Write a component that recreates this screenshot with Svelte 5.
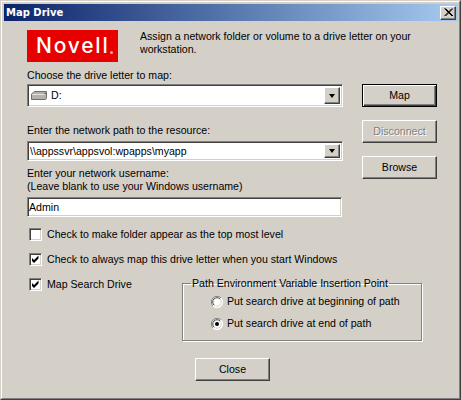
<script lang="ts">
	const checkPath = 'M2.5 5 L4.5 7 L9 2.5 V5.5 L4.5 10 L2.5 8 Z';
</script>

<div class="window">
	<div class="frame">
		<header class="titlebar">
			<span class="title">Map Drive</span>
			<button class="close-x" aria-label="Close">
				<svg width="9" height="9" viewBox="0 0 9 9"><path d="M0.5 0.5 L8 8 M1.5 0.5 L9 8 M8 0.5 L0.5 8 M9 0.5 L1.5 8" stroke="#000" stroke-width="1" fill="none" /></svg>
			</button>
		</header>

		<main class="content">
			<div class="intro">
				<div class="logo"><span class="logo-text">Novell</span><span class="logo-dot"></span></div>
				<p class="intro-text">Assign a network folder or volume to a drive letter on your<br />workstation.</p>
			</div>

			<div class="form">
				<div class="fields">
					<div class="label first">Choose the drive letter to map:</div>
					<div class="combo tall">
						<svg class="drive" width="16" height="9" viewBox="0 0 16 9">
							<path d="M3.5 0.5 H15.5 V7 L14.5 8.5 H0.5 V3 Z" fill="#b4b2ac" stroke="#6e6e6e" />
							<path d="M1 3.5 H14" stroke="#e4e2dc" fill="none" />
							<rect x="13" y="2" width="2" height="1" fill="#1aa01a" />
						</svg>
						<span class="value">D:</span>
						<span class="drop"><i></i></span>
					</div>

					<div class="label second">Enter the network path to the resource:</div>
					<div class="combo">
						<span class="value path">\\appssvr\appsvol:wpapps\myapp</span>
						<span class="drop"><i></i></span>
					</div>

					<div class="label third">Enter your network username:<br />(Leave blank to use your Windows username)</div>
					<div class="textbox">Admin</div>
				</div>

				<div class="actions">
					<button class="btn default">Map</button>
					<button class="btn" disabled>Disconnect</button>
					<button class="btn">Browse</button>
				</div>
			</div>

			<div class="checks">
				<div class="check-row">
					<span class="box"></span>
					<span>Check to make folder appear as the top most level</span>
				</div>
				<div class="check-row">
					<span class="box on"><svg width="13" height="13" viewBox="0 0 13 13"><path d={checkPath} fill="#000" transform="translate(0.5 0)" /></svg></span>
					<span>Check to always map this drive letter when you start Windows</span>
				</div>
			</div>

			<div class="search">
				<div class="check-row search-check">
					<span class="box on"><svg width="13" height="13" viewBox="0 0 13 13"><path d={checkPath} fill="#000" transform="translate(0.5 0)" /></svg></span>
					<span>Map Search Drive</span>
				</div>
				<fieldset class="group">
					<legend>Path Environment Variable Insertion Point</legend>
					<div class="radio-row">
						<svg width="12" height="12" viewBox="0 0 12 12">
							<circle cx="6" cy="6" r="5.5" fill="#fff" />
							<path d="M10 2 A5.5 5.5 0 0 0 2 10" stroke="#808080" fill="none" />
							<path d="M9 3 A4.2 4.2 0 0 0 3 9" stroke="#404040" fill="none" />
							<path d="M2 10 A5.5 5.5 0 0 0 10 2" stroke="#fff" fill="none" />
							<path d="M3 9 A4.2 4.2 0 0 0 9 3" stroke="#d4d0c8" fill="none" />
						</svg>
						<span>Put search drive at beginning of path</span>
					</div>
					<div class="radio-row">
						<svg width="12" height="12" viewBox="0 0 12 12">
							<circle cx="6" cy="6" r="5.5" fill="#fff" />
							<path d="M10 2 A5.5 5.5 0 0 0 2 10" stroke="#808080" fill="none" />
							<path d="M9 3 A4.2 4.2 0 0 0 3 9" stroke="#404040" fill="none" />
							<path d="M2 10 A5.5 5.5 0 0 0 10 2" stroke="#fff" fill="none" />
							<path d="M3 9 A4.2 4.2 0 0 0 9 3" stroke="#d4d0c8" fill="none" />
							<circle cx="6" cy="6" r="2" fill="#000" />
						</svg>
						<span>Put search drive at end of path</span>
					</div>
				</fieldset>
			</div>

			<div class="footer">
				<button class="btn">Close</button>
			</div>
		</main>
	</div>
</div>

<style>
	:global(body) {
		margin: 0;
		background: #d4d0c8;
	}

	.window {
		width: 461px;
		height: 400px;
		box-sizing: border-box;
		border: 1px solid;
		border-color: #d4d0c8 #404040 #404040 #d4d0c8;
		font-family: "Liberation Sans", Arial, sans-serif;
		font-size: 10.6px;
		line-height: 13px;
		color: #000;
		overflow: hidden;
	}

	.frame {
		height: 100%;
		box-sizing: border-box;
		border: 1px solid;
		border-color: #fff #808080 #808080 #fff;
		padding: 2px 1px 0 1px;
		background: #d4d0c8;
		display: flex;
		flex-direction: column;
	}

	.titlebar {
		height: 17px;
		margin-left: 1px;
		padding: 0 2px 0 2px;
		flex-shrink: 0;
		display: flex;
		align-items: center;
		justify-content: space-between;
		background: linear-gradient(to right, #0a246a, #a6caf0);
	}

	.title {
		color: #fff;
		font-family: "DejaVu Sans", sans-serif;
		font-weight: 700;
		font-size: 10px;
	}

	.close-x {
		width: 16px;
		height: 14px;
		padding: 0;
		display: flex;
		align-items: center;
		justify-content: center;
		background: #d4d0c8;
		border: 1px solid;
		border-color: #fff #404040 #404040 #fff;
		box-shadow: inset -1px -1px 0 #808080;
	}

	.content {
		padding: 9px 0 0 24px;
	}

	.intro {
		display: flex;
		align-items: flex-start;
	}

	.logo {
		width: 91px;
		height: 32px;
		background: #e60000;
		display: flex;
		align-items: center;
		gap: 0;
		padding-left: 9px;
		box-sizing: border-box;
		flex-shrink: 0;
	}

	.logo-text {
		color: #fff;
		font-family: Inter, sans-serif;
		font-weight: 500;
		font-size: 21px;
		line-height: 32px;
		letter-spacing: 1.8px;
	}

	.logo-dot {
		width: 3px;
		height: 3px;
		margin-top: 12px;
		border-radius: 50%;
		background: #f8a0a0;
	}

	.intro-text {
		margin: 0 0 0 22px;
	}

	.form {
		display: flex;
		align-items: flex-start;
	}

	.fields {
		width: 316px;
	}

	.label.first {
		margin-top: 7px;
		height: 15px;
	}

	.label.second {
		margin-top: 17px;
		height: 17px;
	}

	.label.third {
		margin-top: 6px;
		height: 30px;
	}

	.combo {
		height: 20px;
		box-sizing: border-box;
		display: flex;
		align-items: center;
		background: #fff;
		border: 1px solid;
		border-color: #808080 #fff #fff #808080;
		box-shadow: inset 1px 1px 0 #404040, inset -1px -1px 0 #d4d0c8;
		padding: 2px;
	}

	.combo.tall {
		height: 23px;
	}

	.drive {
		margin-left: 1px;
		flex-shrink: 0;
	}

	.value {
		flex: 1;
		padding-left: 4px;
	}

	.value.path {
		padding-left: 0;
	}

	.drop {
		width: 16px;
		align-self: stretch;
		box-sizing: border-box;
		display: flex;
		align-items: center;
		justify-content: center;
		background: #d4d0c8;
		border: 1px solid;
		border-color: #fff #404040 #404040 #fff;
		box-shadow: inset -1px -1px 0 #808080;
	}

	.drop i {
		width: 0;
		height: 0;
		border-left: 3.5px solid transparent;
		border-right: 3.5px solid transparent;
		border-top: 4px solid #000;
	}

	.textbox {
		height: 20px;
		width: 315px;
		box-sizing: border-box;
		background: #fff;
		border: 1px solid;
		border-color: #808080 #fff #fff #808080;
		box-shadow: inset 1px 1px 0 #404040, inset -1px -1px 0 #d4d0c8;
		padding: 3px 1px;
	}

	.actions {
		margin: 22px 0 0 19px;
		display: flex;
		flex-direction: column;
		gap: 13px;
	}

	.btn {
		width: 75px;
		height: 23px;
		box-sizing: border-box;
		padding: 0;
		font: inherit;
		color: #000;
		background: #d4d0c8;
		border: 1px solid;
		border-color: #fff #404040 #404040 #fff;
		box-shadow: inset -1px -1px 0 #808080;
	}

	.btn.default {
		border-color: #000;
		box-shadow: inset 1px 1px 0 #fff, inset -1px -1px 0 #404040, inset -2px -2px 0 #808080;
	}

	.btn:disabled {
		color: #808080;
		text-shadow: 1px 1px 0 #fff;
	}

	.checks {
		margin: 11px 0 0 2px;
		display: flex;
		flex-direction: column;
		gap: 12px;
	}

	.check-row {
		display: flex;
		align-items: center;
		gap: 5px;
		height: 13px;
	}

	.box {
		width: 13px;
		height: 13px;
		box-sizing: border-box;
		flex-shrink: 0;
		position: relative;
		background: #fff;
		border: 1px solid;
		border-color: #808080 #fff #fff #808080;
		box-shadow: inset 1px 1px 0 #404040, inset -1px -1px 0 #d4d0c8;
	}

	.box svg {
		position: absolute;
		left: -1px;
		top: -1px;
	}

	.search {
		display: flex;
		align-items: flex-start;
		margin: 12px 0 0 2px;
	}

	.search-check {
		width: 153px;
	}

	.group {
		margin: -1px 0 0;
		padding: 0 0 0 28px;
		width: 240px;
		height: 64px;
		box-sizing: border-box;
		border: 1px solid #808080;
		box-shadow: 1px 1px 0 #fff, inset 1px 1px 0 #fff;
	}

	.group legend {
		margin-left: -20px;
		padding: 0 1px;
		line-height: 13px;
	}

	.radio-row {
		display: flex;
		align-items: center;
		gap: 4px;
		height: 13px;
		margin-top: 5px;
		margin-bottom: 9px;
	}

	.radio-row + .radio-row {
		margin-top: 0;
	}

	.footer {
		margin: 17px 0 0 168px;
	}
</style>
